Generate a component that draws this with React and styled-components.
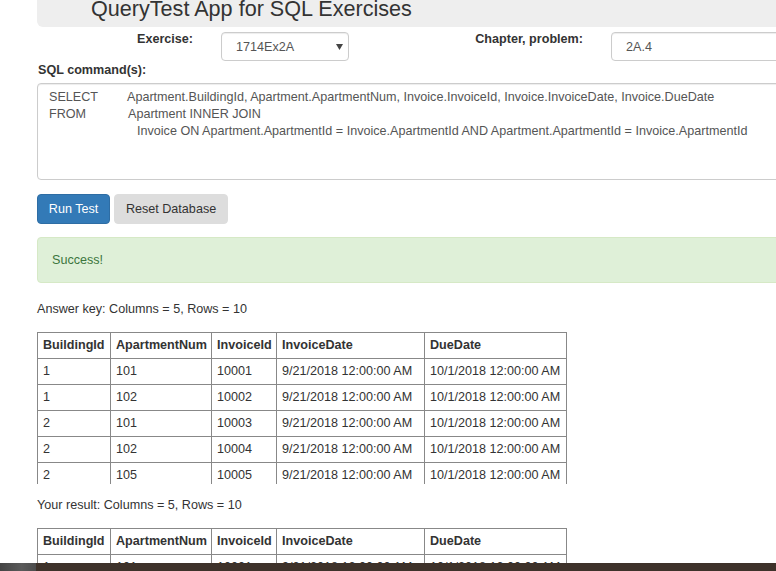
import styled, { createGlobalStyle } from "styled-components";

const GlobalStyle = createGlobalStyle`
  html, body {
    margin: 0;
    padding: 0;
    overflow: hidden;
    background: #fff;
  }
  body {
    font-family: "Liberation Sans", Arial, sans-serif;
    font-size: 12.6px;
    line-height: 18px;
    color: #333;
  }
`;

const Page = styled.div`
  width: 1000px;
  padding-left: 37px;
`;

const Jumbotron = styled.div`
  height: 27px;
  box-sizing: border-box;
  background: #eee;
  border-radius: 0 0 0 6px;
  display: flex;
  align-items: flex-end;
  padding: 0 0 7px 54px;
`;

const Title = styled.h1`
  margin: 0;
  font-size: 21.6px;
  line-height: 22px;
  font-weight: 400;
  color: #333;
`;

const FormRow = styled.div`
  display: flex;
  align-items: flex-start;
  margin-top: 3px;
`;

const Label = styled.label`
  display: block;
  font-weight: 700;
  width: ${(p) => p.$width || "auto"};
  text-align: ${(p) => (p.$right ? "right" : "left")};
  margin-right: ${(p) => (p.$right ? "28px" : "0")};
  margin-left: ${(p) => (p.$right ? "0" : "1px")};
`;

const Control = styled.div`
  box-sizing: border-box;
  height: 29px;
  margin-top: 2px;
  width: ${(p) => p.$width};
  border: 1px solid #ccc;
  border-radius: 4px;
  background: #fff;
  box-shadow: inset 0 1px 1px rgba(0, 0, 0, 0.075);
  color: #555;
  padding: 0 5px 0 14px;
  display: flex;
  align-items: center;
  justify-content: space-between;
`;

const Arrow = styled.svg`
  width: 7px;
  height: 6px;
  fill: #444;
`;

const SqlLabel = styled(Label)`
  margin-bottom: 4px;
`;

const SqlBox = styled.div`
  box-sizing: border-box;
  height: 97px;
  border: 1px solid #ccc;
  border-radius: 4px;
  box-shadow: inset 0 1px 1px rgba(0, 0, 0, 0.075);
  padding: 5px 11px;
  color: #555;
  line-height: 17px;
  white-space: nowrap;
`;

const SqlLine = styled.div`
  display: flex;
  padding-left: ${(p) => p.$indent || 0}px;
`;

const Keyword = styled.span`
  display: inline-block;
  width: ${(p) => p.$width}px;
`;

const Buttons = styled.div`
  display: flex;
  gap: 4px;
  margin-top: 14px;
`;

const Button = styled.button`
  font-family: inherit;
  font-size: 12.6px;
  line-height: 18px;
  height: 30px;
  padding: 0 10.8px;
  border-radius: 4px;
  border: 1px solid ${(p) => (p.$primary ? "#2e6da4" : "#ddd")};
  background: ${(p) => (p.$primary ? "#337ab7" : "#ddd")};
  color: ${(p) => (p.$primary ? "#fff" : "#333")};
  cursor: pointer;
`;

const Alert = styled.div`
  box-sizing: border-box;
  height: 46px;
  margin-top: 13px;
  padding: 0 14px;
  display: flex;
  align-items: center;
  background: #dff0d8;
  border: 1px solid #d6e9c6;
  border-radius: 4px;
  color: #3c763d;
`;

const Caption = styled.p`
  margin: ${(p) => p.$top}px 0 14px;
`;

const TableBox = styled.div`
  width: 540px;
  height: ${(p) => p.$height}px;
  overflow: hidden;
`;

const Table = styled.table`
  border-collapse: collapse;
  table-layout: fixed;
  width: 530px;
`;

const Th = styled.th`
  border: 1px solid #888;
  padding: 4px 5px;
  line-height: 17px;
  text-align: left;
  font-weight: 700;
  white-space: nowrap;
`;

const Td = styled.td`
  border: 1px solid #888;
  padding: 4px 5px;
  line-height: 17px;
  white-space: nowrap;
`;

const TaskBar = styled.div`
  position: fixed;
  left: 0;
  right: 0;
  bottom: 0;
  height: 8px;
  display: flex;
  background: #3e322a;
`;

const TaskStart = styled.div`
  width: 36px;
  background: linear-gradient(90deg, #444 0%, #5a5a5a 60%, #4c4c4c 100%);
`;

const columns = ["BuildingId", "ApartmentNum", "InvoiceId", "InvoiceDate", "DueDate"];
const widths = [73, 101, 65, 148, 142];

const rows = [
  ["1", "101", "10001"],
  ["1", "102", "10002"],
  ["2", "101", "10003"],
  ["2", "102", "10004"],
  ["2", "105", "10005"],
  ["2", "106", "10006"],
  ["3", "201", "10007"],
  ["3", "202", "10008"],
  ["3", "203", "10009"],
  ["4", "301", "10010"],
];

const ResultTable = ({ height }) => (
  <TableBox $height={height}>
    <Table>
      <colgroup>
        {widths.map((w, i) => (
          <col key={i} style={{ width: w }} />
        ))}
      </colgroup>
      <thead>
        <tr>
          {columns.map((c) => (
            <Th key={c}>{c}</Th>
          ))}
        </tr>
      </thead>
      <tbody>
        {rows.map((r) => (
          <tr key={r[2]}>
            <Td>{r[0]}</Td>
            <Td>{r[1]}</Td>
            <Td>{r[2]}</Td>
            <Td>9/21/2018 12:00:00 AM</Td>
            <Td>10/1/2018 12:00:00 AM</Td>
          </tr>
        ))}
      </tbody>
    </Table>
  </TableBox>
);

const App = () => {
  return (
    <>
      <GlobalStyle />
      <Page>
        <Jumbotron>
          <Title>QueryTest App for SQL Exercises</Title>
        </Jumbotron>
        <FormRow>
          <Label $right $width="156px">Exercise:</Label>
          <Control $width="128px">
            <span>1714Ex2A</span>
            <Arrow viewBox="0 0 7 6">
              <polygon points="0,0 7,0 3.5,6" />
            </Arrow>
          </Control>
          <Label $right $width="234px">Chapter, problem:</Label>
          <Control $width="260px">
            <span>2A.4</span>
          </Control>
        </FormRow>
        <SqlLabel>SQL command(s):</SqlLabel>
        <SqlBox>
          <SqlLine>
            <Keyword $width={78}>SELECT</Keyword>
            Apartment.BuildingId, Apartment.ApartmentNum, Invoice.InvoiceId, Invoice.InvoiceDate, Invoice.DueDate
          </SqlLine>
          <SqlLine>
            <Keyword $width={79}>FROM</Keyword>
            Apartment INNER JOIN
          </SqlLine>
          <SqlLine $indent={88}>
            Invoice ON Apartment.ApartmentId = Invoice.ApartmentId AND Apartment.ApartmentId = Invoice.ApartmentId
          </SqlLine>
        </SqlBox>
        <Buttons>
          <Button $primary>Run Test</Button>
          <Button>Reset Database</Button>
        </Buttons>
        <Alert>Success!</Alert>
        <Caption $top={17}>Answer key: Columns = 5, Rows = 10</Caption>
        <ResultTable height={152} />
        <Caption $top={12}>Your result: Columns = 5, Rows = 10</Caption>
        <ResultTable height={152} />
      </Page>
      <TaskBar>
        <TaskStart />
      </TaskBar>
    </>
  );
};

export default App;
